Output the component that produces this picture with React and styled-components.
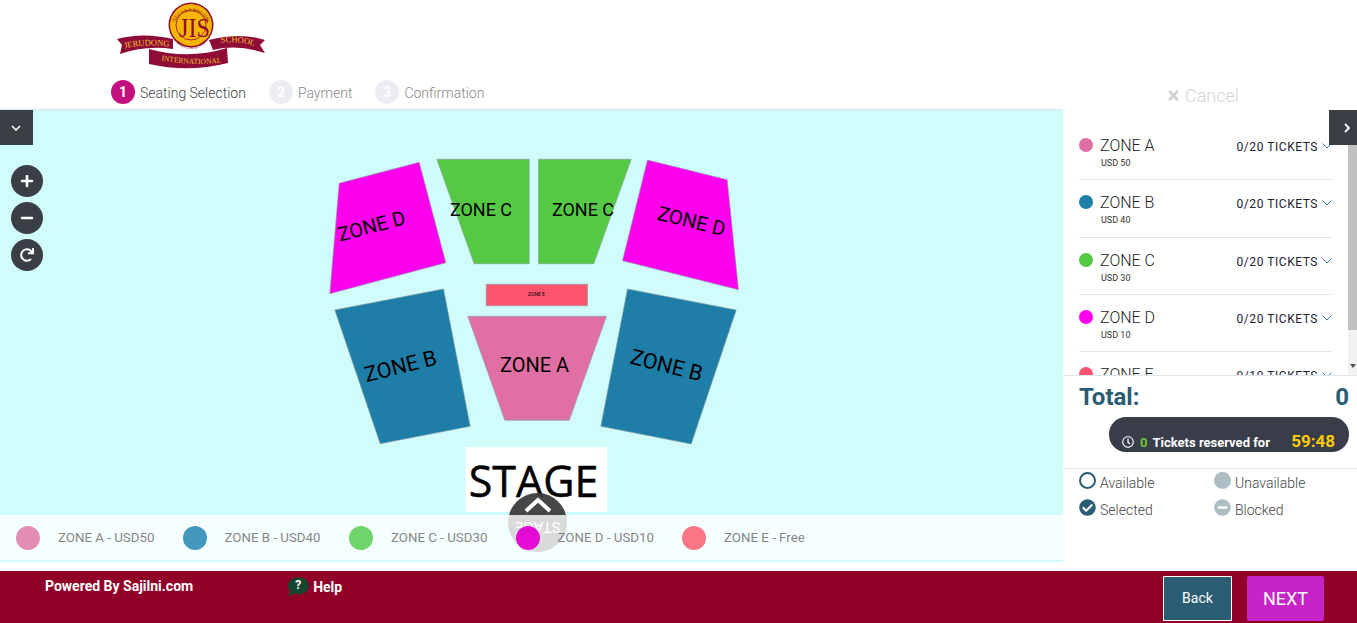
import styled, { createGlobalStyle } from "styled-components";
import {
  FaPlus,
  FaMinus,
  FaRedo,
  FaTimes,
  FaCheckCircle,
  FaMinusCircle,
  FaRegClock,
  FaComment,
} from "react-icons/fa";

const zones = [
  { name: "ZONE A", price: "USD 50", tickets: "0/20", color: "#e06fa4", soft: "#e28db3", legend: "ZONE A - USD50" },
  { name: "ZONE B", price: "USD 40", tickets: "0/20", color: "#1e7ea8", soft: "#4299bd", legend: "ZONE B - USD40" },
  { name: "ZONE C", price: "USD 30", tickets: "0/20", color: "#55c944", soft: "#6fd56a", legend: "ZONE C - USD30" },
  { name: "ZONE D", price: "USD 10", tickets: "0/20", color: "#ff00ee", soft: "#e40cd4", legend: "ZONE D - USD10" },
  { name: "ZONE E", price: "Free", tickets: "0/10", color: "#ff5470", soft: "#fb7585", legend: "ZONE E - Free" },
];

const shapes = [
  { color: "#ff00ee", points: "338.7,183.3 418.7,162.3 445.3,262.7 329.3,293.7" },
  { color: "#55c944", points: "436.3,159.3 528.7,159.3 528.7,263.7 473.7,263.7" },
  { color: "#55c944", points: "538,159.3 630.7,159.3 593.3,263.7 538,263.7" },
  { color: "#ff00ee", points: "647,160 726.7,179.7 738,289.7 622,260.7" },
  { color: "#ff5470", points: "485.7,284.3 587,284.3 587,305.7 485.7,305.7" },
  { color: "#1e7ea8", points: "443,289 469.7,426.3 379.7,443.7 334.3,310" },
  { color: "#e06fa4", points: "467.3,316.3 606,316.3 568.7,420.3 504.3,420.3" },
  { color: "#1e7ea8", points: "627,289 735.7,310 690.7,444 600.3,426.3" },
];

const labels = [
  { text: "ZONE D", x: 371, y: 226, angle: -15, size: 20 },
  { text: "ZONE C", x: 480.5, y: 209, angle: 0, size: 18 },
  { text: "ZONE C", x: 582.5, y: 209, angle: 0, size: 18 },
  { text: "ZONE D", x: 691, y: 221, angle: 14, size: 20 },
  { text: "ZONE E", x: 536, y: 294, angle: 0, size: 5 },
  { text: "ZONE B", x: 400, y: 366, angle: -14, size: 21.5 },
  { text: "ZONE A", x: 534, y: 365, angle: 0, size: 20 },
  { text: "ZONE B", x: 666, y: 365, angle: 14, size: 21.5 },
];

const steps = [
  { number: 1, label: "Seating Selection", active: true },
  { number: 2, label: "Payment" },
  { number: 3, label: "Confirmation" },
];

const Logo = () => (
  <svg width="160" height="72" viewBox="0 0 160 72">
    <defs>
      <path id="leftBand" d="M13 49 Q35 43 61 47" />
      <path id="rightBand" d="M108 43 Q128 40 147 47" />
      <path id="bottomBand" d="M46 59 Q80 67 117 62" />
      <path id="topArc" d="M64 25 A17.5 17.5 0 0 1 98 25" />
      <path id="lowArc" d="M60 28 A21 21 0 0 0 102 28" />
    </defs>
    <path d="M39 49 Q78 60 117 48 L118 63 Q78 73 39 64 Z" fill="#8e0c36" />
    <path d="M7 39 Q33 32 63 39 L63 49 Q36 45 10 54 L12 45 Z" fill="#8e0c36" />
    <path d="M99 40 Q130 32 155 40 L150 45 L155 53 Q128 44 103 50 Z" fill="#8e0c36" />
    <circle cx="81" cy="25" r="22.5" fill="#8e0c36" />
    <circle cx="81" cy="25" r="21" fill="#f7b500" />
    <circle cx="81" cy="25" r="15" fill="#f7b500" stroke="#8e0c36" strokeWidth="0.8" />
    <LogoText fontSize="28" x="69" y="37" textLength="31" lengthAdjust="spacingAndGlyphs" fill="#8e0c36">JIS</LogoText>
    <LogoText fontSize="5" fill="#8e0c36">
      <textPath href="#topArc" startOffset="50%" textAnchor="middle">NEGARA BRUNEI</textPath>
    </LogoText>
    <LogoText fontSize="4.6" fill="#8e0c36">
      <textPath href="#lowArc" startOffset="50%" textAnchor="middle">DARUSSALAM</textPath>
    </LogoText>
    <LogoText fontSize="8.5" fill="#f4c430">
      <textPath href="#leftBand" startOffset="50%" textAnchor="middle">JERUDONG</textPath>
    </LogoText>
    <LogoText fontSize="8.5" fill="#f4c430">
      <textPath href="#rightBand" startOffset="50%" textAnchor="middle">SCHOOL</textPath>
    </LogoText>
    <LogoText fontSize="7.6" fill="#f4c430">
      <textPath href="#bottomBand" startOffset="50%" textAnchor="middle">INTERNATIONAL</textPath>
    </LogoText>
  </svg>
);

const SeatMap = () => (
  <svg width="430" height="365" viewBox="316.5 150 430 365">
    {shapes.map((shape) => (
      <polygon key={shape.points} points={shape.points} fill={shape.color} stroke="#8a9a9a" strokeWidth="0.6" />
    ))}
    {labels.map((label) => (
      <ZoneLabel
        key={`${label.text}-${label.x}`}
        x={label.x}
        y={label.y}
        fontSize={label.size}
        textAnchor="middle"
        dominantBaseline="central"
        transform={`rotate(${label.angle} ${label.x} ${label.y})`}
      >
        {label.text}
      </ZoneLabel>
    ))}
    <rect x="465" y="447" width="142" height="65" fill="#fff" />
    <StageLabel x="533" y="497" textAnchor="middle">STAGE</StageLabel>
  </svg>
);

const App = () => {
  return (
    <Page>
      <GlobalStyle />
      <Header>
        <HeaderLeft>
          <LogoRow>
            <Logo />
          </LogoRow>
          <Steps>
            {steps.map((step) => (
              <Step key={step.number} $active={step.active}>
                <StepNumber $active={step.active}>{step.number}</StepNumber>
                <StepLabel>{step.label}</StepLabel>
              </Step>
            ))}
          </Steps>
        </HeaderLeft>
        <CancelBox>
          <FaTimes size={15} />
          Cancel
        </CancelBox>
      </Header>

      <Body>
        <MapColumn>
          <MapPanel>
            <MapToggle>
              <svg width="10" height="6" viewBox="0 0 10 6">
                <polyline points="1,1 5,5 9,1" fill="none" stroke="#fff" strokeWidth="1.6" />
              </svg>
            </MapToggle>
            <Controls>
              <ControlButton><FaPlus size={14} /></ControlButton>
              <ControlButton><FaMinus size={14} /></ControlButton>
              <ControlButton><FaRedo size={14} /></ControlButton>
            </Controls>
            <SeatArea>
              <SeatMap />
            </SeatArea>
            <StageToggle>
              <svg width="28" height="16" viewBox="0 0 28 16">
                <polyline points="2,14 14,3 26,14" fill="none" stroke="#fff" strokeWidth="4" />
              </svg>
              <StageToggleText>STAGE</StageToggleText>
            </StageToggle>
            <Legend>
              {zones.map((zone) => (
                <LegendItem key={zone.name}>
                  <LegendDot $color={zone.soft} />
                  {zone.legend}
                </LegendItem>
              ))}
            </Legend>
          </MapPanel>
        </MapColumn>

        <Sidebar>
          <SidebarToggle>
            <svg width="6" height="10" viewBox="0 0 6 10">
              <polyline points="1,1 5,5 1,9" fill="none" stroke="#fff" strokeWidth="1.8" />
            </svg>
          </SidebarToggle>
          <ScrollTrack>
            <ScrollThumb />
            <ScrollArrow />
          </ScrollTrack>
          <ZoneList>
            {zones.map((zone) => (
              <ZoneRow key={zone.name}>
                <ZoneDot $color={zone.color} />
                <ZoneInfo>
                  <ZoneName>{zone.name}</ZoneName>
                  <ZonePrice>{zone.price}</ZonePrice>
                </ZoneInfo>
                <Tickets>{zone.tickets} TICKETS</Tickets>
                <TicketCaret viewBox="0 0 10 6">
                  <polyline points="0.5,0.5 5,5 9.5,0.5" />
                </TicketCaret>
              </ZoneRow>
            ))}
          </ZoneList>
          <TotalRow>
            <span>Total:</span>
            <span>0</span>
          </TotalRow>
          <Timer>
            <FaRegClock size={12} />
            <TimerCount>0</TimerCount>
            <TimerLabel>Tickets reserved for</TimerLabel>
            <TimerClock>59:48</TimerClock>
          </Timer>
          <SeatKey>
            <KeyItem><RingIcon />Available</KeyItem>
            <KeyItem><GrayDisc />Unavailable</KeyItem>
            <KeyItem><FaCheckCircle size={17} color="#2a5d73" />Selected</KeyItem>
            <KeyItem><FaMinusCircle size={17} color="#adbdc4" />Blocked</KeyItem>
          </SeatKey>
        </Sidebar>
      </Body>

      <Footer>
        <Powered>Powered By Sajilni.com</Powered>
        <Help>
          <HelpBubble>
            <FaComment size={21} color="#14452f" />
            <HelpMark>?</HelpMark>
          </HelpBubble>
          Help
        </Help>
        <FooterButtons>
          <BackButton>Back</BackButton>
          <NextButton>NEXT</NextButton>
        </FooterButtons>
      </Footer>
    </Page>
  );
};

export default App;

const GlobalStyle = createGlobalStyle`
  html, body {
    margin: 0;
    padding: 0;
    overflow: hidden;
    background: #fff;
    font-family: Roboto, "Liberation Sans", sans-serif;
  }
  * {
    box-sizing: border-box;
  }
`;

const Page = styled.div`
  display: flex;
  flex-direction: column;
  width: 1357px;
  height: 623px;
`;

const Header = styled.header`
  display: flex;
  height: 110px;
`;

const HeaderLeft = styled.div`
  width: 1063px;
  border-bottom: 1px solid #dde6e6;
`;

const LogoRow = styled.div`
  display: flex;
  height: 80px;
  padding-left: 110px;
`;

const LogoText = styled.text`
  font-family: "Liberation Serif", serif;
`;

const Steps = styled.div`
  display: flex;
  padding-left: 111px;
  gap: 23px;
`;

const Step = styled.div`
  display: flex;
  align-items: center;
  gap: 5px;
  height: 24px;
  font-size: 14px;
  font-weight: 300;
  color: ${(p) => (p.$active ? "#444" : "#888")};
`;

const StepNumber = styled.span`
  display: flex;
  align-items: center;
  justify-content: center;
  width: 24px;
  height: 24px;
  border-radius: 50%;
  font-size: 14px;
  font-weight: 700;
  color: #fff;
  background: ${(p) => (p.$active ? "#c4107f" : "#ecedf2")};
`;

const StepLabel = styled.span`
  margin-top: 2px;
`;

const CancelBox = styled.div`
  display: flex;
  flex: 1;
  align-items: center;
  gap: 4px;
  height: 24px;
  margin-top: 83px;
  padding-left: 103px;
  font-size: 18px;
  font-weight: 300;
  color: #d4d4d4;
`;

const Body = styled.main`
  display: flex;
  height: 461px;
`;

const MapColumn = styled.div`
  width: 1063px;
`;

const MapPanel = styled.div`
  position: relative;
  height: 452px;
  background: #d0fcfc;
`;

const MapToggle = styled.div`
  position: absolute;
  top: 0;
  left: 0;
  display: flex;
  align-items: center;
  justify-content: center;
  width: 33px;
  height: 35px;
  padding-right: 2px;
  color: #fff;
  background: #3a3e45;
`;

const Controls = styled.div`
  position: absolute;
  top: 55px;
  left: 11px;
  display: flex;
  flex-direction: column;
  gap: 5px;
`;

const ControlButton = styled.div`
  display: flex;
  align-items: center;
  justify-content: center;
  width: 32px;
  height: 32px;
  border-radius: 50%;
  color: #fff;
  background: #3a3e45;
`;

const SeatArea = styled.div`
  display: flex;
  align-items: flex-end;
  justify-content: center;
  height: 405px;
`;

const ZoneLabel = styled.text`
  font-family: Roboto, sans-serif;
  fill: #000;
`;

const StageLabel = styled.text`
  font-family: "Open Sans", sans-serif;
  font-size: 43px;
  fill: #000;
  stroke: #000;
  stroke-width: 0.5px;
`;

const StageToggle = styled.div`
  position: absolute;
  top: 383px;
  left: 508px;
  display: flex;
  flex-direction: column;
  align-items: center;
  width: 59px;
  height: 59px;
  padding-top: 4px;
  border-radius: 50%;
  background: rgba(60, 60, 60, 0.95);
`;

const StageToggleText = styled.span`
  margin-top: 5px;
  font-size: 15px;
  color: #fff;
  transform: rotate(180deg);
`;

const Legend = styled.div`
  position: relative;
  display: flex;
  align-items: center;
  height: 45px;
  padding-left: 16px;
  background: rgba(255, 255, 255, 0.8);
`;

const LegendItem = styled.div`
  display: flex;
  align-items: center;
  width: 166.5px;
  font-size: 13.3px;
  color: #868686;
`;

const LegendDot = styled.span`
  width: 24px;
  height: 24px;
  margin-right: 18px;
  border-radius: 50%;
  background: ${(p) => p.$color};
`;

const Sidebar = styled.aside`
  position: relative;
  display: flex;
  flex-direction: column;
  flex: 1;
`;

const SidebarToggle = styled.div`
  position: absolute;
  top: 0;
  right: 0;
  z-index: 2;
  display: flex;
  align-items: center;
  justify-content: center;
  width: 28px;
  height: 35px;
  padding-left: 7px;
  background: #3a3e45;
`;

const ScrollTrack = styled.div`
  position: absolute;
  top: 0;
  right: 0;
  display: flex;
  flex-direction: column;
  align-items: center;
  width: 9px;
  height: 265px;
  padding: 9px 0 7px;
  background: #f1f1f1;
`;

const ScrollThumb = styled.div`
  width: 9px;
  height: 211px;
  background: #c1c1c1;
`;

const ScrollArrow = styled.div`
  margin-top: auto;
  border-top: 4px solid #505050;
  border-right: 3px solid transparent;
  border-left: 3px solid transparent;
`;

const ZoneList = styled.div`
  height: 266px;
  padding: 13px 25px 0 16px;
  overflow: hidden;
  border-bottom: 1px solid #dde6ea;
`;

const ZoneRow = styled.div`
  display: flex;
  align-items: flex-start;
  height: 57.33px;
  padding-top: 14px;
  border-bottom: 1px solid #dde6ea;
`;

const ZoneDot = styled.span`
  width: 14px;
  height: 14px;
  margin: 1px 7px 0 0;
  border-radius: 50%;
  background: ${(p) => p.$color};
`;

const ZoneInfo = styled.div`
  display: flex;
  flex-direction: column;
  flex: 1;
`;

const ZoneName = styled.span`
  font-size: 16px;
  font-weight: 300;
  line-height: 18px;
  color: #222;
`;

const ZonePrice = styled.span`
  margin: 2px 0 0 1px;
  font-size: 9px;
  line-height: 12px;
  color: #333;
`;

const Tickets = styled.span`
  font-size: 12px;
  font-weight: 400;
  line-height: 20px;
  letter-spacing: 0.55px;
  color: #1c2233;
`;

const TicketCaret = styled.svg`
  width: 10px;
  height: 6px;
  margin: 6px 0 0 4px;
  fill: none;
  stroke: #2f78a8;
  stroke-width: 1;
`;

const TotalRow = styled.div`
  display: flex;
  align-items: center;
  justify-content: space-between;
  height: 41px;
  padding: 0 8px 0 16px;
  font-size: 24px;
  font-weight: 700;
  color: #2a5d73;
`;

const Timer = styled.div`
  display: flex;
  align-items: flex-end;
  height: 35px;
  margin: 0 8px 16px 46px;
  padding: 0 14px 1px 13px;
  border-radius: 17px;
  color: #fff;
  background: #393d4a;

  svg {
    margin-bottom: 3px;
  }
`;

const TimerCount = styled.span`
  margin-left: 6px;
  font-size: 13px;
  font-weight: 700;
  line-height: 17px;
  color: #6cc82e;
`;

const TimerLabel = styled.span`
  flex: 1;
  margin-left: 5px;
  font-size: 13px;
  font-weight: 700;
  line-height: 17px;
`;

const TimerClock = styled.span`
  font-size: 17px;
  font-weight: 700;
  line-height: 20px;
  color: #ffcc00;
`;

const SeatKey = styled.div`
  display: grid;
  grid-template-columns: 135px 1fr;
  grid-auto-rows: 27px;
  padding: 3px 0 0 16px;
  border-top: 1px solid #dde6ea;
`;

const KeyItem = styled.div`
  display: flex;
  align-items: flex-start;
  gap: 4px;
  font-size: 14px;
  font-weight: 300;
  line-height: 22px;
  color: #444;

  svg {
    flex: none;
  }
`;

const RingIcon = styled.span`
  width: 17px;
  height: 17px;
  border: 2.5px solid #2a5d73;
  border-radius: 50%;
`;

const GrayDisc = styled.span`
  width: 17px;
  height: 17px;
  border-radius: 50%;
  background: #adbdc4;
`;

const Footer = styled.footer`
  display: flex;
  flex: 1;
  align-items: flex-start;
  padding: 5px 33px 0 45px;
  background: #900028;
`;

const Powered = styled.div`
  margin-top: 2px;
  font-size: 14px;
  font-weight: 700;
  line-height: 17px;
  color: #fff;
`;

const Help = styled.div`
  display: flex;
  align-items: center;
  gap: 4px;
  margin-left: 95px;
  font-size: 14px;
  font-weight: 700;
  color: #fff;
`;

const HelpBubble = styled.span`
  position: relative;
  display: flex;
`;

const HelpMark = styled.span`
  position: absolute;
  top: 2px;
  left: 7px;
  font-size: 12px;
  font-weight: 700;
  color: #fff;
`;

const FooterButtons = styled.div`
  display: flex;
  gap: 15px;
  margin-left: auto;
`;

const BackButton = styled.button`
  width: 69px;
  height: 45px;
  padding: 0 0 2px;
  border: 1px solid #fff;
  font-family: inherit;
  font-size: 14px;
  color: #fff;
  background: #2a5d73;
`;

const NextButton = styled.button`
  width: 77px;
  height: 45px;
  padding: 0;
  border: 0;
  border-radius: 2px;
  font-family: inherit;
  font-size: 18px;
  color: #fff;
  background: #c724c7;
`;
